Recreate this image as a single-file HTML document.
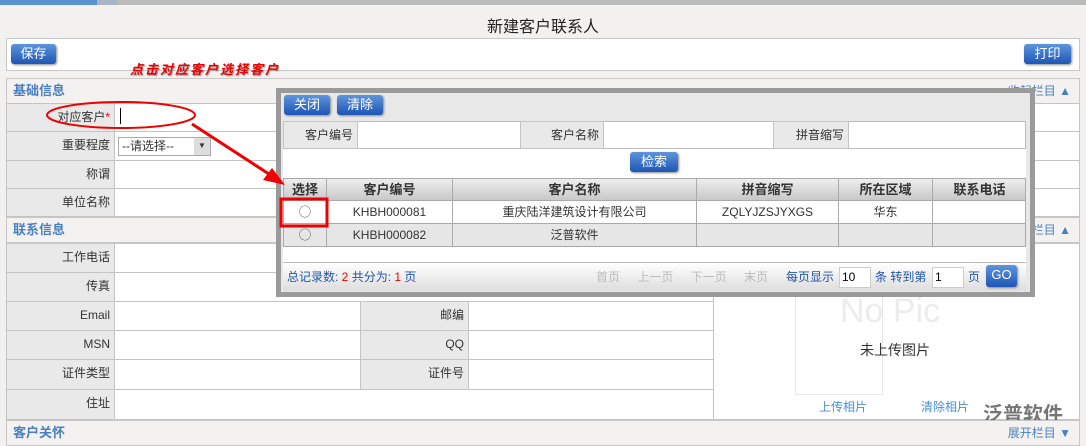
<!DOCTYPE html><html><head><meta charset="utf-8"><style>
*{margin:0;padding:0;box-sizing:border-box}
body{width:1086px;height:446px;overflow:hidden;background:#f3f1ef;font-family:"Liberation Sans","Noto Sans CJK SC",sans-serif;font-size:12px;color:#333;position:relative}
.a{position:absolute}
.btn{position:absolute;background:linear-gradient(#5f95db,#1d55b5);color:#fff;border-radius:3px;font-size:13px;text-align:center;line-height:20px;box-shadow:1px 1px 2px #888}
.sec{position:absolute;left:6px;width:1074px;height:26px;background:#f4f2f0;border:1px solid #c8c8c8;color:#4a7fc1;font-size:13px;font-weight:bold;line-height:24px;padding-left:6px}
.lab{position:absolute;background:#e9e9e9;border:1px solid #c4c4c4;text-align:right;padding-right:4px;line-height:27px;font-size:12px}
.val{position:absolute;background:#fff;border:1px solid #c4c4c4}
.c{position:absolute;text-align:center;border-right:1px solid #aaa;line-height:22px}
</style></head><body>
<div class="a" style="left:0;top:0;width:1086px;height:5px;background:#bbb"></div>
<div class="a" style="left:0;top:0;width:97px;height:5px;background:#5a8fd0"></div>
<div class="a" style="left:97px;top:0;width:20px;height:5px;background:#a9b5c5"></div>
<div class="a" style="left:0;top:13px;width:1086px;text-align:center;font-size:16px;color:#222">新建客户联系人</div>
<div class="a" style="left:6px;top:38px;width:1074px;height:33px;background:#fff;border:1px solid #c8c8c8"></div>
<div class="btn" style="left:11px;top:44px;width:45px">保存</div>
<div class="btn" style="left:1024px;top:44px;width:47px">打印</div>
<div class="a" style="left:130px;top:59px;color:#e00;font-size:13px;letter-spacing:2px;font-weight:bold;font-style:italic;text-shadow:1px 1px 1px #999">点击对应客户选择客户</div>
<div class="sec" style="top:78px">基础信息<span style="position:absolute;right:8px;font-weight:normal;font-size:12px">收起栏目 ▲</span></div>
<div class="lab" style="left:6px;top:103px;width:109px;height:29px">对应客户<span style="color:#e00">*</span></div>
<div class="val" style="left:114px;top:103px;width:966px;height:29px"><div style="margin:4px 5px;width:1px;height:16px;background:#000"></div></div>
<div class="lab" style="left:6px;top:131px;width:109px;height:30px">重要程度</div>
<div class="val" style="left:114px;top:131px;width:966px;height:30px"><div style="margin:5px 3px;width:93px;height:19px;border:1px solid #aaa;font-size:12px;line-height:16px;padding-left:3px">--请选择--<span style="float:right;width:16px;height:17px;background:#ddd;text-align:center;font-size:8px">▼</span></div></div>
<div class="lab" style="left:6px;top:160px;width:109px;height:29px">称谓</div>
<div class="val" style="left:114px;top:160px;width:966px;height:29px"></div>
<div class="lab" style="left:6px;top:188px;width:109px;height:29px">单位名称</div>
<div class="val" style="left:114px;top:188px;width:966px;height:29px"></div>
<div class="sec" style="top:217px">联系信息<span style="position:absolute;right:8px;font-weight:normal;font-size:12px">收起栏目 ▲</span></div>
<div class="val" style="left:713px;top:243px;width:367px;height:177px"></div>
<div class="a" style="left:795px;top:250px;width:88px;height:145px;border:1px solid #e8e8e8;background:#fff"></div>
<div class="a" style="left:840px;top:292px;font-size:34px;color:#ececec">No Pic</div>
<div class="a" style="left:860px;top:340px;font-size:14px;color:#333">未上传图片</div>
<div class="a" style="left:819px;top:398px;color:#4a8fd4">上传相片</div>
<div class="a" style="left:921px;top:398px;color:#4a8fd4">清除相片</div>
<div class="a" style="left:983px;top:398px;color:#555;font-size:20px;font-weight:bold;opacity:.8">泛普软件</div>
<div class="lab" style="left:6px;top:243px;width:109px;height:30px">工作电话</div><div class="val" style="left:114px;top:243px;width:600px;height:30px"></div>
<div class="lab" style="left:6px;top:272px;width:109px;height:30px">传真</div><div class="val" style="left:114px;top:272px;width:600px;height:30px"></div>
<div class="lab" style="left:6px;top:301px;width:109px;height:30px">Email</div><div class="val" style="left:114px;top:301px;width:247px;height:30px"></div>
<div class="lab" style="left:360px;top:301px;width:109px;height:30px">邮编</div><div class="val" style="left:468px;top:301px;width:246px;height:30px"></div>
<div class="lab" style="left:6px;top:330px;width:109px;height:30px">MSN</div><div class="val" style="left:114px;top:330px;width:247px;height:30px"></div>
<div class="lab" style="left:360px;top:330px;width:109px;height:30px">QQ</div><div class="val" style="left:468px;top:330px;width:246px;height:30px"></div>
<div class="lab" style="left:6px;top:359px;width:109px;height:31px">证件类型</div><div class="val" style="left:114px;top:359px;width:247px;height:31px"></div>
<div class="lab" style="left:360px;top:359px;width:109px;height:31px">证件号</div><div class="val" style="left:468px;top:359px;width:246px;height:31px"></div>
<div class="lab" style="left:6px;top:389px;width:109px;height:31px">住址</div><div class="val" style="left:114px;top:389px;width:600px;height:31px"></div>
<div class="sec" style="top:420px">客户关怀<span style="position:absolute;right:8px;font-weight:normal;font-size:12px;color:#4a7fc1">展开栏目 ▼</span></div>

<div class="a" style="left:276px;top:88px;width:759px;height:209px;border:5px solid #9a9a9a;background:#e8e8e8"></div>
<div class="btn" style="left:284px;top:95px;width:46px">关闭</div>
<div class="btn" style="left:337px;top:95px;width:46px">清除</div>
<div class="a" style="left:283px;top:121px;width:743px;height:28px;background:#fff;border:1px solid #bbb"></div>
<div class="lab" style="left:283px;top:121px;width:75px;height:28px">客户编号</div>
<div class="lab" style="left:520px;top:121px;width:84px;height:28px">客户名称</div>
<div class="lab" style="left:773px;top:121px;width:76px;height:28px">拼音缩写</div>
<div class="a" style="left:283px;top:149px;width:743px;height:30px;background:#fff"></div>
<div class="btn" style="left:630px;top:152px;width:48px">检索</div>
<div class="a" style="left:283px;top:178px;width:743px;height:23px;background:linear-gradient(#eee,#c8c8c8);border:1px solid #aaa;font-weight:bold;font-size:13px">
<div class="c" style="left:0;width:43px">选择</div><div class="c" style="left:43px;width:126px">客户编号</div><div class="c" style="left:169px;width:244px">客户名称</div><div class="c" style="left:413px;width:142px">拼音缩写</div><div class="c" style="left:555px;width:94px">所在区域</div><div class="c" style="left:649px;width:93px;border:0">联系电话</div></div>
<div class="a" style="left:283px;top:200px;width:743px;height:24px;background:#fff;border:1px solid #aaa">
<div class="c" style="left:0;width:43px">◯</div><div class="c" style="left:43px;width:126px">KHBH000081</div><div class="c" style="left:169px;width:244px">重庆陆洋建筑设计有限公司</div><div class="c" style="left:413px;width:142px">ZQLYJZSJYXGS</div><div class="c" style="left:555px;width:94px">华东</div></div>
<div class="a" style="left:283px;top:223px;width:743px;height:24px;background:#e6e6e6;border:1px solid #aaa">
<div class="c" style="left:0;width:43px">◯</div><div class="c" style="left:43px;width:126px">KHBH000082</div><div class="c" style="left:169px;width:244px">泛普软件</div><div class="c" style="left:413px;width:142px;height:22px"></div><div class="c" style="left:555px;width:94px;height:22px"></div></div>
<div class="a" style="left:283px;top:247px;width:743px;height:15px;background:#fff"></div>
<div class="a" style="left:283px;top:262px;width:743px;height:29px;background:linear-gradient(#fff,#ddd);border-top:1px solid #bbb;line-height:28px;color:#2255aa;padding-left:4px">总记录数: <span style="color:#e00">2</span> 共分为: <span style="color:#e00">1</span> 页
<span style="position:absolute;left:313px;color:#bbb;word-spacing:14px">首页 上一页 下一页 末页</span>
<span style="position:absolute;left:503px">每页显示</span><span style="position:absolute;left:556px;top:4px;width:32px;height:21px;background:#fff;border:1px solid #ccc;line-height:19px;color:#000;padding-left:2px">10</span>
<span style="position:absolute;left:592px">条 转到第</span><span style="position:absolute;left:649px;top:4px;width:32px;height:21px;background:#fff;border:1px solid #ccc;line-height:19px;color:#000;padding-left:2px">1</span>
<span style="position:absolute;left:685px">页</span></div>
<div class="btn" style="left:986px;top:265px;width:31px;height:22px">GO</div>

<svg class="a" style="left:0;top:0" width="1086" height="446">
<ellipse cx="121" cy="115" rx="74" ry="13" fill="none" stroke="#e00" stroke-width="2"/>
<rect x="281" y="199" width="46" height="27" fill="none" stroke="#e00" stroke-width="3"/>
<line x1="192" y1="124" x2="272" y2="176" stroke="#e00" stroke-width="3"/>
<polygon points="285,185 263,180 272,168" fill="#e00"/>
</svg>
</body></html>
